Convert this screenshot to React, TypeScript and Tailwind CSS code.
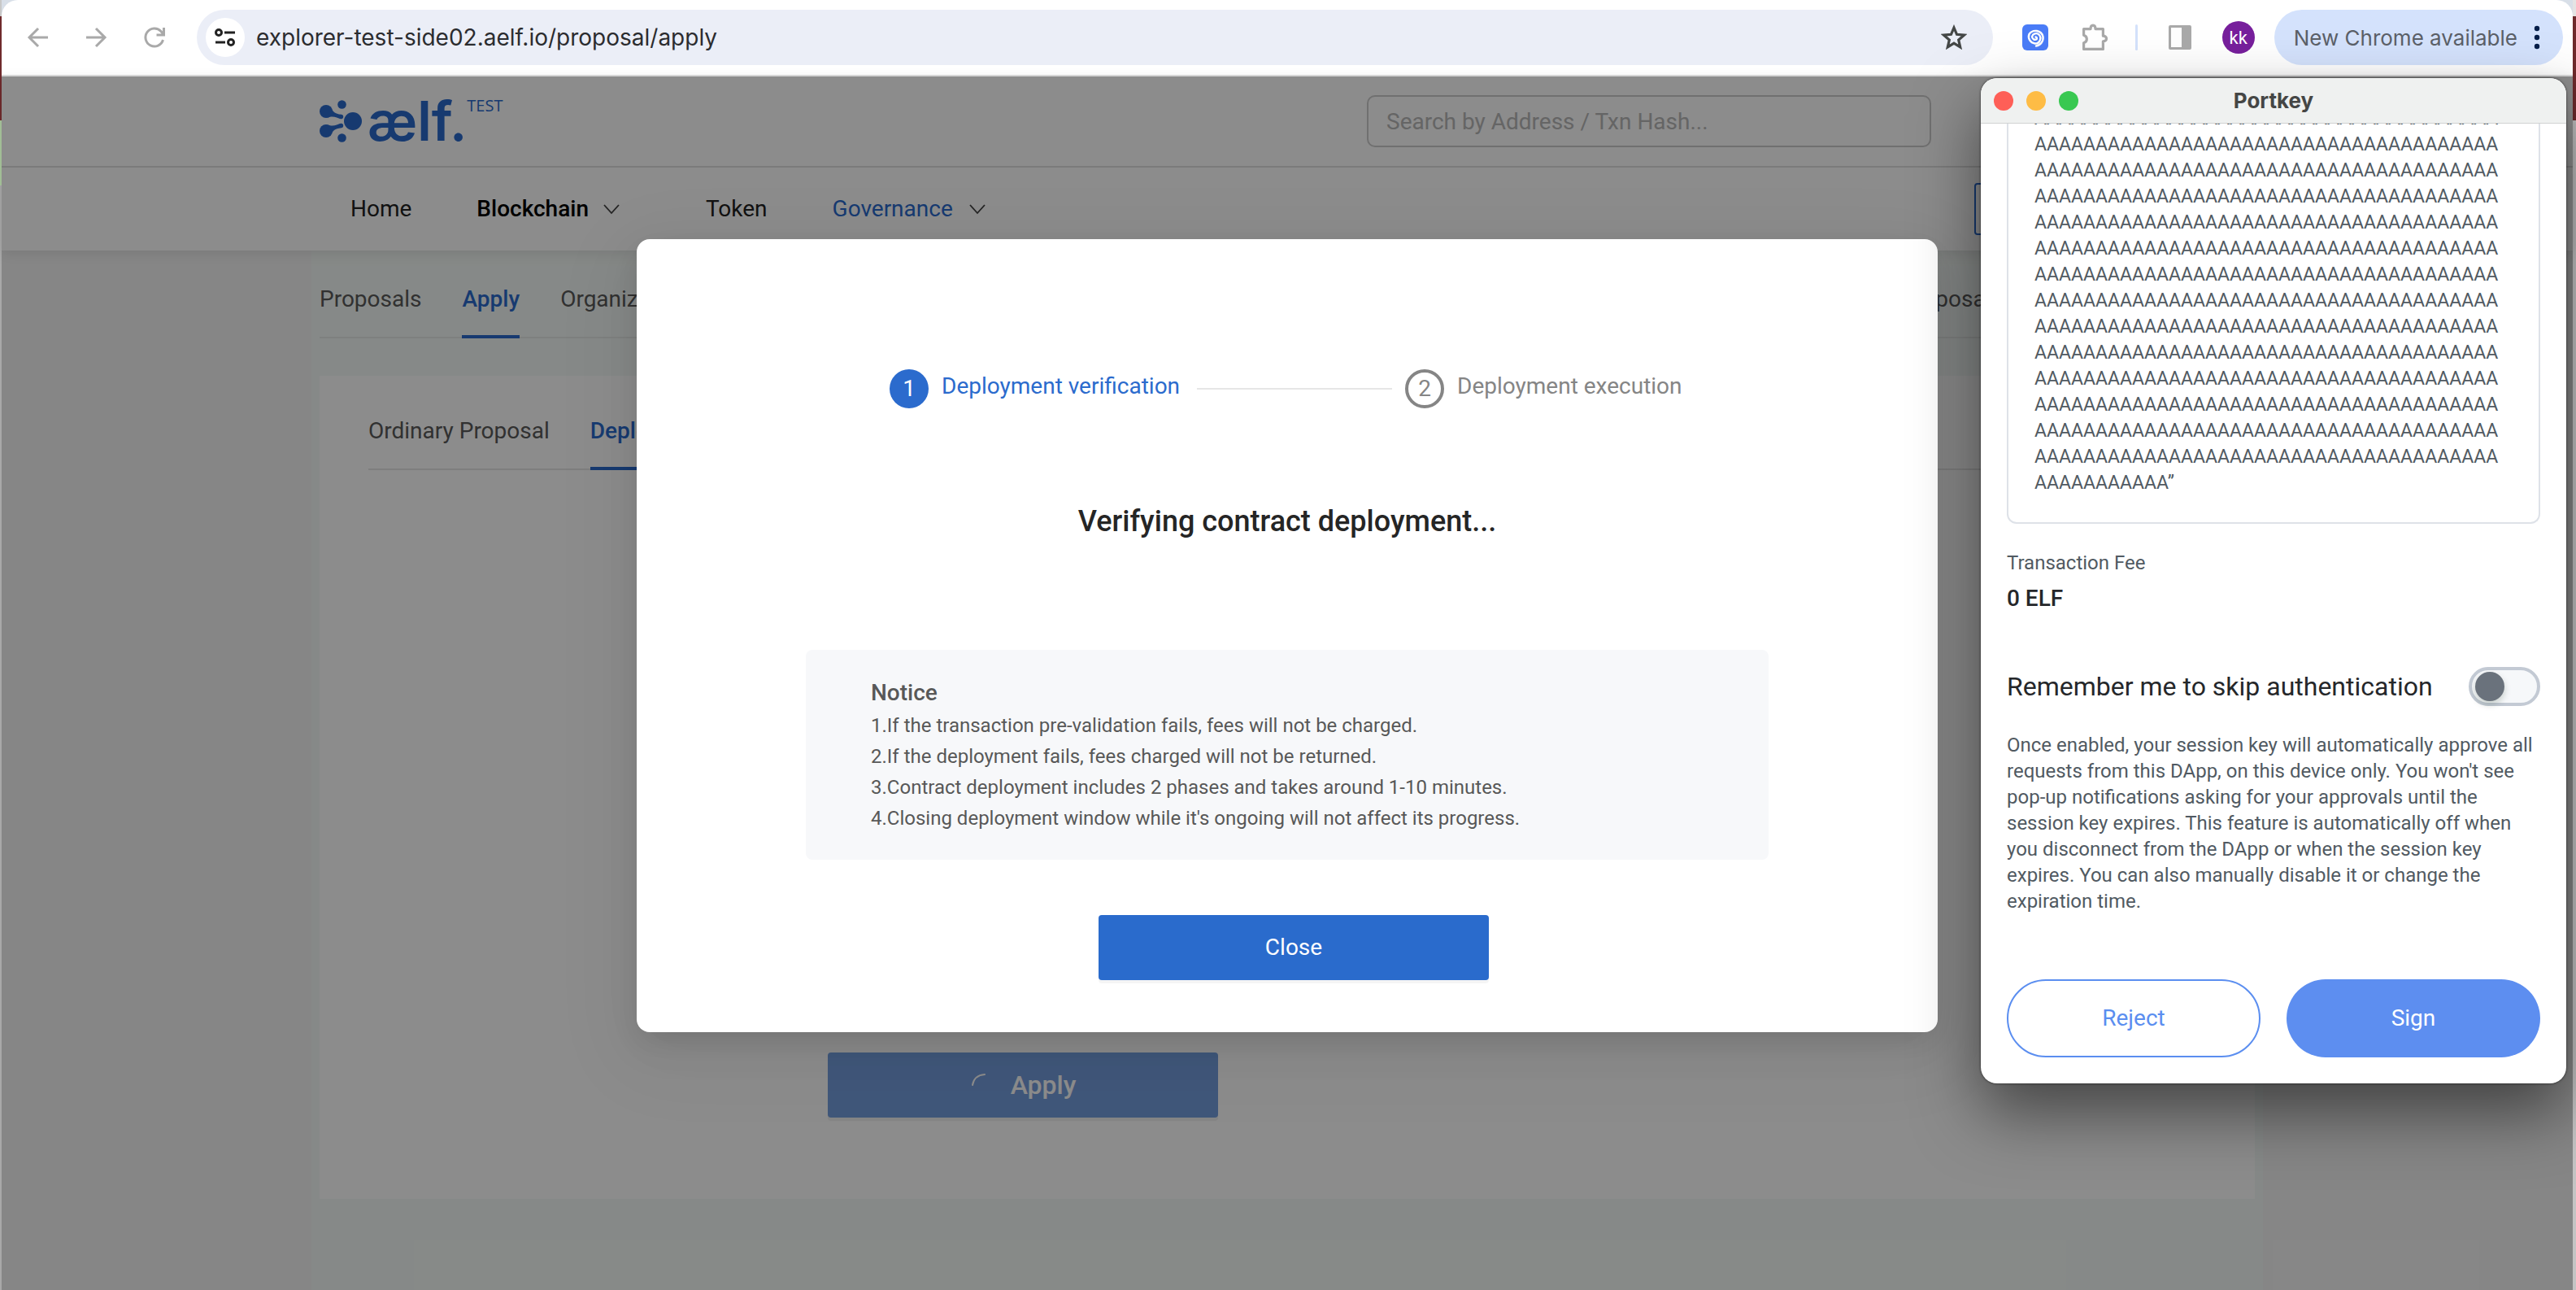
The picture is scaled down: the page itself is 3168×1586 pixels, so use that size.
import React from "react";

const A_ROWS = Array.from({ length: 14 }, () => "A".repeat(38));

const NOTICES = [
  "1.If the transaction pre-validation fails, fees will not be charged.",
  "2.If the deployment fails, fees charged will not be returned.",
  "3.Contract deployment includes 2 phases and takes around 1-10 minutes.",
  "4.Closing deployment window while it's ongoing will not affect its progress.",
];

function Toolbar() {
  return (
    <header className="flex h-[94px] items-center rounded-t-[20px] border-b-2 border-[#dcdcdc] bg-white pr-3 font-['Inter',sans-serif]">
      <div className="flex w-[240px] shrink-0 items-center gap-[44px] pl-[30px] text-[#a9a9a9]">
        <button aria-label="Back" className="size-7">
          <svg viewBox="0 0 28 28" className="size-7" fill="none" stroke="currentColor" strokeWidth="3">
            <path d="M27 14H4.500M15 3 4 14l11 11" />
          </svg>
        </button>
        <button aria-label="Forward" className="size-7">
          <svg viewBox="0 0 28 28" className="size-7" fill="none" stroke="currentColor" strokeWidth="3">
            <path d="M2 14h22.500M14 3l11 11-11 11" />
          </svg>
        </button>
        <button aria-label="Reload" className="size-7">
          <svg viewBox="0 0 28 28" className="size-7" fill="none" stroke="currentColor" strokeWidth="3">
            <path d="M24.500 17A11 11 0 1 1 22 6.500l2.500 3M25.500 2v9h-9" />
          </svg>
        </button>
      </div>
      <div className="flex h-[68px] flex-1 items-center rounded-full bg-[#ebeef7] pl-[11px] pr-8">
        <button aria-label="View site information" className="flex size-12 items-center justify-center rounded-full bg-white">
          <svg viewBox="0 0 26 24" className="h-6 w-[26px]" fill="none" stroke="#222" strokeWidth="3">
            <circle cx="5" cy="6" r="3.500" />
            <path d="M12 6h13M1 18h12" />
            <circle cx="20" cy="18" r="3.500" />
          </svg>
        </button>
        <input
          aria-label="Address"
          defaultValue="explorer-test-side02.aelf.io/proposal/apply"
          className="ml-[14px] flex-1 bg-transparent text-[28px] text-[#2b2c2f] outline-none"
        />
        <button aria-label="Bookmark" className="size-8">
          <svg viewBox="0 0 32 32" className="size-8" fill="none" stroke="#444746" strokeWidth="3.200">
            <path d="m16 4 3.500 8.300 9 .8-6.800 5.900 2 8.800L16 23.100l-7.700 4.700 2-8.800-6.800-5.900 9-.8z" />
          </svg>
        </button>
      </div>
      <div className="ml-9 flex items-center">
        <button aria-label="Portkey extension" className="size-8 rounded-[6px] bg-[#4a7cf7]">
          <svg viewBox="0 0 32 32" className="size-8" fill="none" stroke="#fff" strokeWidth="2.400" strokeLinecap="round">
            <path d="M16.500 15.500A1.800 1.800 0 0 1 17.500 18.500A4 4 0 0 1 12 15A5.200 5.200 0 0 1 20.500 12.500A6.500 6.500 0 0 1 15.500 23.500A8.500 8.500 0 0 1 8.500 12A9.500 9.500 0 0 1 25.500 15A10 10 0 0 1 17 26.500" />
          </svg>
        </button>
        <button aria-label="Extensions" className="ml-10 size-9">
          <svg viewBox="0 0 36 36" className="size-9" fill="none" stroke="#a9a9a9" strokeWidth="3.200" strokeLinejoin="round">
            <path d="M3.600 7.600H12c0-6 6-6 6 0h9.400v8.600c5.500 0 5.500 6.600 0 6.600v9.600H3.600v-7.600c5-1.500 5-8 0-9.600z" />
          </svg>
        </button>
        <span className="ml-[31px] h-8 w-[3px] rounded bg-[#d3e1fb]" />
        <button aria-label="Side panel" className="ml-[36px] size-8">
          <svg viewBox="0 0 32 32" className="size-8" fill="#a9a9a9">
            <path fillRule="evenodd" d="M4 1h24q2 0 2 2v26q0 2-2 2H4q-2 0-2-2V3q0-2 2-2zm1 3v24h13V4z" />
          </svg>
        </button>
        <button className="ml-9 size-10 rounded-full bg-[#771f9c] font-['Roboto',sans-serif] text-[22px] text-white">kk</button>
        <button className="ml-6 flex h-[68px] items-center gap-5 rounded-full bg-[#d4e2fc] pl-6 pr-7 text-[26px] text-[#5b6068]">
          New Chrome available
          <svg viewBox="0 0 8 30" className="h-[30px] w-2" fill="#041e49">
            <circle cx="4" cy="4" r="3.200" />
            <circle cx="4" cy="15" r="3.200" />
            <circle cx="4" cy="26" r="3.200" />
          </svg>
        </button>
      </div>
    </header>
  );
}

function Logo() {
  return (
    <a href="#home" className="flex items-start text-[#2b6bcd]" aria-label="aelf explorer">
      <svg viewBox="0 0 52 52" className="mt-[7px] size-[52px]" fill="currentColor">
        <circle cx="27.500" cy="5.500" r="5.300" />
        <circle cx="27.500" cy="46.500" r="5.300" />
        <circle cx="41" cy="26" r="11" />
        <circle cx="8" cy="14" r="8" />
        <circle cx="8" cy="38" r="8" />
        <circle cx="26.500" cy="20.500" r="2.700" />
        <circle cx="26.500" cy="31.500" r="2.700" />
        <path d="M13 7.500c3 7 6 9.500 13.500 10.300v5.400C21 22 17 18.500 9.500 21.800zM13 44.500c3-7 6-9.500 13.500-10.300v-5.400C21 30 17 33.500 9.500 30.200z" />
      </svg>
      <span className="ml-[7px] font-['Inter',sans-serif] text-[67px] font-semibold leading-[66px]">ælf.</span>
      <span className="font-['Open_Sans',sans-serif] text-[20px] leading-7">TEST</span>
    </a>
  );
}

function Chevron() {
  return (
    <svg viewBox="0 0 20 14" className="h-[14px] w-5" fill="none" stroke="#444" strokeWidth="1.800">
      <path d="M1 2l9 10 9-10" />
    </svg>
  );
}

function SiteHeader() {
  return (
    <div className="relative bg-white shadow-[0_4px_16px_rgba(0,0,0,0.1)]">
      <div className="border-b-2 border-[#e1e1e1]">
        <div className="mx-auto flex h-[110px] max-w-[2400px] items-center px-[10px]">
          <Logo />
          <input
            aria-label="Search"
            placeholder="Search by Address / Txn Hash..."
            className="ml-auto mr-[398px] h-16 w-[694px] rounded-[10px] border-2 border-[#ccc] px-[22px] text-[28px] placeholder:text-[#b8b8b8]"
          />
        </div>
      </div>
      <nav className="mx-auto flex h-[102px] max-w-[2400px] items-center pl-[48px] pr-[10px] text-[28px] text-[#222]">
        <a href="#home">Home</a>
        <button className="ml-20 flex items-center gap-[18px] font-medium text-black">
          Blockchain <Chevron />
        </button>
        <a href="#token" className="ml-[106px]">Token</a>
        <button className="ml-20 flex items-center gap-5 text-[#2b6bcd]">
          Governance <Chevron />
        </button>
        <button aria-label="Wallet" className="ml-auto h-16 w-[345px] rounded border-2 border-[#2b6bcd]" />
      </nav>
    </div>
  );
}

function Tab({ label, active = false }: { label: string; active?: boolean }) {
  return (
    <button
      className={
        active
          ? "-mb-[2px] border-b-4 border-[#2b6bcd] font-medium text-[#2b6bcd]"
          : "-mb-[2px] border-b-4 border-transparent text-[#595959]"
      }
    >
      {label}
    </button>
  );
}

function ProposalPage() {
  return (
    <main className="mx-auto w-full max-w-[2400px] flex-1 bg-[#f5faf7] px-[10px] text-[28px]">
      <div className="flex h-[108px] items-stretch gap-[50px] border-b-2 border-[#e6e9e7] pt-4">
        <Tab label="Proposals" />
        <Tab label="Apply" active />
        <Tab label="Organizations" />
        <span className="ml-auto mr-[310px] flex"><Tab label="Proposals" /></span>
      </div>
      <section className="mt-[46px] bg-white px-[60px] pb-[100px]">
        <div className="flex h-[116px] items-stretch gap-[50px] border-b-2 border-[#e6e6e6] pt-6">
          <Tab label="Ordinary Proposal" />
          <Tab label="Deploy/Update Contract" active />
        </div>
        <button className="ml-[565px] mt-[716px] flex h-20 w-[480px] items-center justify-center gap-[18px] rounded bg-[#769ede] text-[32px] font-medium text-white shadow-[0_4px_0_rgba(0,0,0,0.05)]">
          <svg viewBox="0 0 32 32" className="size-8" fill="none" stroke="currentColor" strokeWidth="2" strokeLinecap="round">
            <path d="M3 16Q5 4 18 3" />
          </svg>
          Apply
        </button>
      </section>
    </main>
  );
}

function DeployModal() {
  return (
    <div className="absolute inset-0 flex items-start justify-center bg-black/45 pt-[200px]">
      <div
        role="dialog"
        aria-modal="true"
        aria-labelledby="verify-title"
        className="flex w-[1600px] flex-col items-center rounded-[16px] bg-white pb-16 pt-40 shadow-[0_12px_32px_-8px_rgba(0,0,0,0.12),0_18px_56px_rgba(0,0,0,0.06),0_24px_96px_32px_rgba(0,0,0,0.03)]"
      >
        <div className="flex items-start gap-4 text-[28px] leading-[42px]">
          <span className="size-12 rounded-full bg-[#2b6bcd] text-center leading-[48px] text-white">1</span>
          <span className="min-w-[298px] text-[#2b6bcd]">Deployment verification</span>
          <span className="mt-[23px] h-[2px] w-[240px] bg-[#e6e6e6]" />
          <span className="size-12 rounded-full border-4 border-[#858585] text-center leading-10 text-[#858585]">2</span>
          <span className="min-w-[280px] text-[#858585]">Deployment execution</span>
        </div>
        <h2 id="verify-title" className="mt-28 text-[36px] font-medium leading-[54px] text-[#252525]">
          Verifying contract deployment...
        </h2>
        <div className="mt-[131px] w-[1184px] rounded-[8px] bg-[#f7f8fa] px-20 py-8 text-[#585858]">
          <h3 className="text-[28px] font-medium leading-[42px]">Notice</h3>
          <ul className="text-[24px] leading-[38px]">
            {NOTICES.map((n) => (
              <li key={n}>{n}</li>
            ))}
          </ul>
        </div>
        <button className="ml-4 mt-[68px] h-20 w-[480px] rounded bg-[#2a6bcc] text-[28px] text-white shadow-[0_4px_0_rgba(0,0,0,0.04)]">
          Close
        </button>
      </div>
    </div>
  );
}

function PortkeyWindow() {
  return (
    <section className="absolute right-3 top-24 w-[720px] overflow-hidden rounded-[20px] bg-white shadow-[0_0_3px_rgba(0,0,0,0.7),0_36px_80px_rgba(0,0,0,0.5)]">
      <div className="flex h-[56px] items-center border-b border-[#d0d2d2] bg-[#eff1f0] px-4">
        <div className="flex w-[104px] gap-4">
          <button aria-label="Close window" className="size-6 rounded-full bg-[#fe5f57]" />
          <button aria-label="Minimize window" className="size-6 rounded-full bg-[#febc45]" />
          <button aria-label="Zoom window" className="size-6 rounded-full bg-[#38c851]" />
        </div>
        <h2 className="mr-[104px] flex-1 text-center font-['Inter',sans-serif] text-[26px] font-bold leading-8 text-[#454645]">Portkey</h2>
      </div>
      <div className="px-8 pb-8 text-[24px] leading-8 text-[#515a62]">
        <div className="flex h-[492px] flex-col justify-end overflow-hidden rounded-b-[12px] border-x-2 border-b-2 border-[#dee2e8] px-8 pb-8 text-[23px]">
          {A_ROWS.map((row, i) => (
            <p key={i} className="whitespace-nowrap">{row}</p>
          ))}
          <p>AAAAAAAAAAA”</p>
        </div>
        <p className="mt-8">Transaction Fee</p>
        <p className="mt-2 text-[28px] font-medium leading-10 text-[#25272a]">0 ELF</p>
        <label className="mt-16 flex items-center justify-between text-[32px] leading-[48px] text-[#25272a]">
          Remember me to skip authentication
          <span className="flex h-12 w-[88px] items-center rounded-full border-4 border-[#c3cad4] bg-[#f6f8fa] px-1">
            <input type="checkbox" role="switch" className="size-9 appearance-none rounded-full bg-[#6a727c] shadow-[0_4px_8px_rgba(0,35,11,0.2)]" />
          </span>
        </label>
        <p className="mt-8">
          Once enabled, your session key will automatically approve all requests from this DApp, on this device only. You won't see
          pop-up notifications asking for your approvals until the session key expires. This feature is automatically off when you
          disconnect from the DApp or when the session key expires. You can also manually disable it or change the expiration time.
        </p>
        <div className="mt-20 grid grid-cols-2 gap-8 text-[28px]">
          <button className="h-24 rounded-full border-2 border-[#5b8ef0] text-[#5b8ef0]">Reject</button>
          <button className="h-24 rounded-full bg-[#5d8ef0] text-white">Sign</button>
        </div>
      </div>
    </section>
  );
}

export default function App() {
  return (
    <div className="relative flex min-h-screen overflow-hidden bg-[#d8dfe8] font-['Roboto',sans-serif]">
      <div className="flex w-[2px] flex-col">
        <span className="h-5 bg-[#c8c8c8]" />
        <span className="h-32 bg-[#6f2a2c]" />
        <span className="h-20 bg-[#a9c79d]" />
        <span className="flex-1 bg-[#a8a8a8]" />
      </div>
      <div className="flex min-w-0 flex-1 flex-col">
        <Toolbar />
        <div className="relative flex flex-1 flex-col bg-[#f5f5f5]">
          <SiteHeader />
          <ProposalPage />
          <DeployModal />
        </div>
      </div>
      <div className="flex w-1 flex-col">
        <span className="h-5 bg-[#e4e4e4]" />
        <span className="h-32 bg-[#6f2a2c]" />
        <span className="flex-1 bg-[#c4c4c4]" />
      </div>
      <PortkeyWindow />
    </div>
  );
}
